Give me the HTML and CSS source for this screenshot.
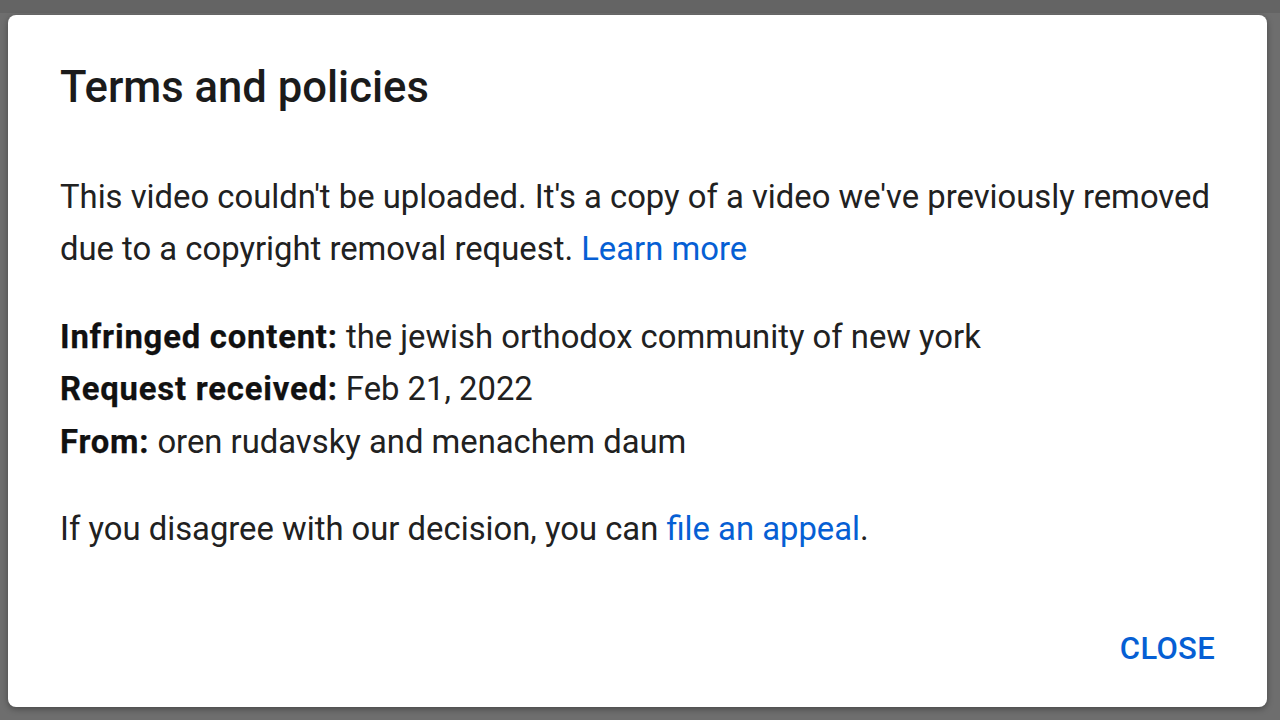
FILE: index.html
```html
<!DOCTYPE html>
<html>
<head>
<meta charset="utf-8">
<link rel="stylesheet" href="styles.css">
</head>
<body>
<div class="backdrop">
  <div class="dialog">
    <h1 class="title">Terms and policies</h1>
    <p class="body-text">This video couldn't be uploaded. It's a copy of a video we've previously removed due to a copyright removal request. <a class="link" href="#">Learn more</a></p>
    <div class="info">
      <div><b>Infringed content:</b> the jewish orthodox community of new york</div>
      <div><b>Request received:</b> Feb 21, 2022</div>
      <div><b>From:</b> oren rudavsky and menachem daum</div>
    </div>
    <p class="body-text appeal">If you disagree with our decision, you can <a class="link" href="#">file an appeal</a>.</p>
    <div class="actions">
      <button class="close-btn">CLOSE</button>
    </div>
  </div>
</div>
</body>
</html>
```
FILE: styles.css
```css
html, body {
  margin: 0;
  padding: 0;
  width: 1280px;
  height: 720px;
  overflow: hidden;
  background: #6e6e6e;
  font-family: Roboto, "Liberation Sans", sans-serif;
}
.backdrop {
  box-sizing: border-box;
  width: 1280px;
  height: 720px;
  padding: 15px 13px 13px 8px;
  background: linear-gradient(#646464 0, #646464 13px, #6e6e6e 13px);
}
.dialog {
  box-sizing: border-box;
  height: 692px;
  background: #fff;
  border-radius: 8px;
  box-shadow: 0 2px 6px rgba(0,0,0,0.35);
  padding: 48px 36px 0 52px;
  color: #212121;
  display: flex;
  flex-direction: column;
}
.title {
  margin: 0;
  font-size: 43.6px;
  font-weight: 500;
  line-height: 50px;
  color: #1b1b1b;
}
.body-text {
  margin: 0;
  font-size: 32.8px;
  line-height: 52px;
}
.title + .body-text {
  margin-top: 58px;
}
.info {
  margin-top: 35.5px;
  font-size: 32.8px;
  line-height: 52.5px;
}
.info b {
  font-weight: 700;
  color: #111;
  letter-spacing: 0.8px;
  -webkit-text-stroke: 0.25px #111;
}
.appeal {
  margin-top: 35px;
}
.link {
  color: #065fd4;
  text-decoration: none;
}
.actions {
  margin-top: auto;
  padding-bottom: 40px;
  padding-right: 16px;
  display: flex;
  justify-content: flex-end;
}
.close-btn {
  border: none;
  background: none;
  padding: 0;
  font-family: Roboto, "Liberation Sans", sans-serif;
  font-size: 31px;
  font-weight: 500;
  color: #065fd4;
  letter-spacing: 0.3px;
  line-height: 36px;
}
```
